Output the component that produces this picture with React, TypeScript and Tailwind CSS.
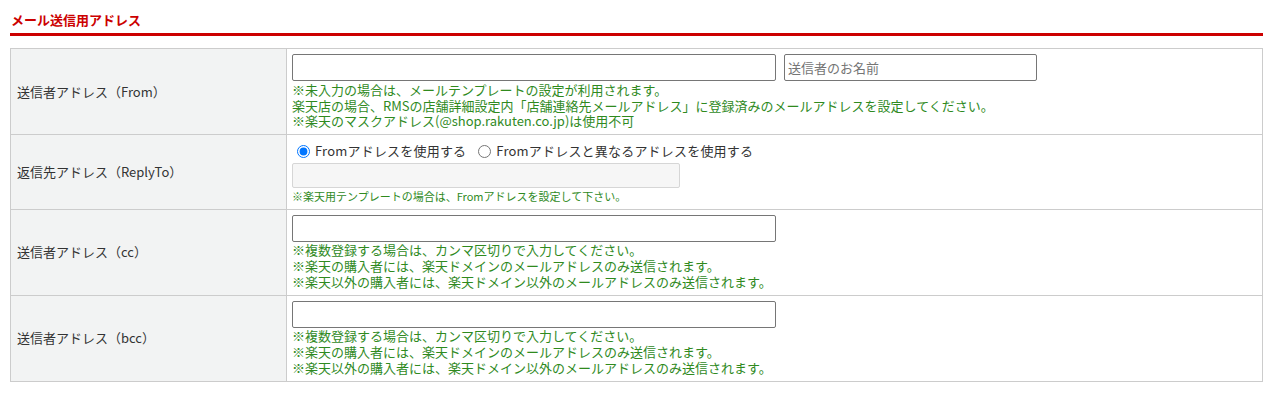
import { useState } from 'react';

const FONT = { fontFamily: '"Noto Sans CJK JP", "Noto Sans", sans-serif' };

// green notes under each field
const Note = ({ lines, small }: { lines: string[]; small?: boolean }) => (
  <div className={small ? 'text-[11px] leading-[16px] text-[#2f8a1e]' : 'text-[13px] leading-[16px] text-[#2f8a1e]'}>
    {lines.map((l) => (
      <div key={l}>{l}</div>
    ))}
  </div>
);

const Row = ({ label, children, last }: { label: string; children: React.ReactNode; last?: boolean }) => (
  <div className={`flex ${last ? '' : 'border-b border-[#cccccc]'}`}>
    <div className="w-[276px] shrink-0 bg-[#f2f3f3] border-r border-[#cccccc] pl-[6px] flex items-center text-[13px] text-[#333333]">
      {label}
    </div>
    <div className="flex-1 pl-[5px] pt-[5px] pb-[5px]">{children}</div>
  </div>
);

const TextBox = ({ w, placeholder }: { w: string; placeholder?: string }) => (
  <input
    type="text"
    placeholder={placeholder}
    className={`${w} h-[27px] border border-[#767676] rounded-[2px] px-[3px] text-[13px] text-[#333] placeholder:text-[#757575] outline-none bg-white`}
    style={FONT}
  />
);

const ccNotes = [
  '※複数登録する場合は、カンマ区切りで入力してください。',
  '※楽天の購入者には、楽天ドメインのメールアドレスのみ送信されます。',
  '※楽天以外の購入者には、楽天ドメイン以外のメールアドレスのみ送信されます。',
];

export default function App() {
  const [reply, setReply] = useState('from');

  return (
    <div className="bg-white w-[1277px] h-[393px] px-[10px] pt-[10px]" style={FONT}>
      <div className="text-[13px] font-bold text-[#cc0000] leading-[19px] pl-px">メール送信用アドレス</div>
      <div className="h-[3px] bg-[#cc0000] mt-[4px] w-[1253px]" />
      <div className="mt-[12px] w-[1253px] border border-[#cccccc]">
        <Row label="送信者アドレス（From）">
          <div className="flex gap-[8px]">
            <TextBox w="w-[484px]" />
            <TextBox w="w-[253px]" placeholder="送信者のお名前" />
          </div>
          <div className="text-[13px] leading-[15.5px] pt-[1px]">
            <div className="text-[#2f8a1e]">※未入力の場合は、メールテンプレートの設定が利用されます。</div>
            <div className="text-[#2f8a1e]">楽天店の場合、RMSの店舗詳細設定内「店舗連絡先メールアドレス」に登録済みのメールアドレスを設定してください。</div>
            <div className="text-[#2f8a1e]">※楽天のマスクアドレス(@shop.rakuten.co.jp)は使用不可</div>
          </div>
        </Row>
        <Row label="返信先アドレス（ReplyTo）">
          <div className="flex items-center h-[23px] text-[13px] text-[#333] pl-[5px]">
            <label className="flex items-center gap-[5px]">
              <input
                type="radio"
                name="reply"
                checked={reply === 'from'}
                onChange={() => setReply('from')}
                className="w-[13px] h-[13px] m-0 accent-[#0075ff]"
              />
              <span className="tracking-[0.2px]">Fromアドレスを使用する</span>
            </label>
            <label className="flex items-center gap-[5px] ml-[12px]">
              <input
                type="radio"
                name="reply"
                checked={reply === 'other'}
                onChange={() => setReply('other')}
                className="w-[13px] h-[13px] m-0 accent-[#0075ff]"
              />
              <span className="tracking-[0.2px]">Fromアドレスと異なるアドレスを使用する</span>
            </label>
          </div>
          <input
            type="text"
            disabled
            className="block w-[388px] h-[25px] border border-[#d6d6d6] rounded-[2px] bg-[#f6f6f6]"
          />
          <Note small lines={['※楽天用テンプレートの場合は、Fromアドレスを設定して下さい。']} />
        </Row>
        <Row label="送信者アドレス（cc）">
          <TextBox w="w-[484px]" />
          <Note lines={ccNotes} />
        </Row>
        <Row label="送信者アドレス（bcc）" last>
          <TextBox w="w-[484px]" />
          <Note lines={ccNotes} />
        </Row>
      </div>
    </div>
  );
}
